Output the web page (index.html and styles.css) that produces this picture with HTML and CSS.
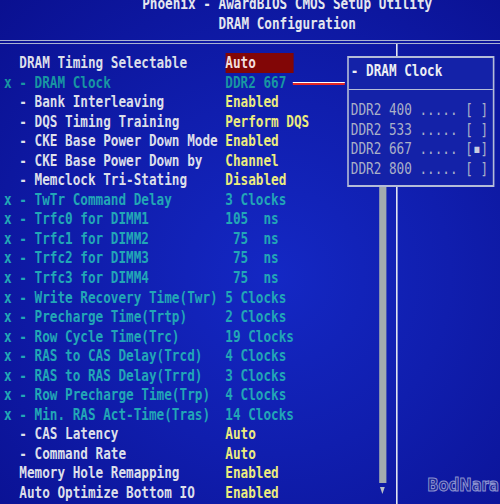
FILE: index.html
```html
<!DOCTYPE html>
<html lang="en">
<head>
    <meta charset="UTF-8">
    <meta name="viewport" content="width=device-width, initial-scale=1.0">
    <title>DRAM Configuration</title>
    <link rel="stylesheet" href="styles.css">
</head>
<body>
    <div class="screen">
        <div class="title">
            <div>Phoenix - AwardBIOS CMOS Setup Utility</div>
            <div>DRAM Configuration</div>
        </div>
        <div class="rule"></div>

        <div class="main">
            <div class="list">
                <div class="row"><span class="mark"></span><span class="label">DRAM Timing Selectable</span><span class="value sel">Auto</span></div>
                <div class="row dim first"><span class="mark">x</span><span class="label">- DRAM Clock</span><span class="value">DDR2 667</span></div>
                <div class="row"><span class="mark"></span><span class="label">- Bank Interleaving</span><span class="value">Enabled</span></div>
                <div class="row"><span class="mark"></span><span class="label">- DQS Timing Training</span><span class="value">Perform DQS</span></div>
                <div class="row"><span class="mark"></span><span class="label">- CKE Base Power Down Mode</span><span class="value">Enabled</span></div>
                <div class="row"><span class="mark"></span><span class="label">- CKE Base Power Down by</span><span class="value">Channel</span></div>
                <div class="row"><span class="mark"></span><span class="label">- Memclock Tri-Stating</span><span class="value">Disabled</span></div>
                <div class="row dim"><span class="mark">x</span><span class="label">- TwTr Command Delay</span><span class="value">3 Clocks</span></div>
                <div class="row dim"><span class="mark">x</span><span class="label">- Trfc0 for DIMM1</span><span class="value">105  ns</span></div>
                <div class="row dim"><span class="mark">x</span><span class="label">- Trfc1 for DIMM2</span><span class="value"> 75  ns</span></div>
                <div class="row dim"><span class="mark">x</span><span class="label">- Trfc2 for DIMM3</span><span class="value"> 75  ns</span></div>
                <div class="row dim"><span class="mark">x</span><span class="label">- Trfc3 for DIMM4</span><span class="value"> 75  ns</span></div>
                <div class="row dim"><span class="mark">x</span><span class="label">- Write Recovery Time(Twr)</span><span class="value">5 Clocks</span></div>
                <div class="row dim"><span class="mark">x</span><span class="label">- Precharge Time(Trtp)</span><span class="value">2 Clocks</span></div>
                <div class="row dim"><span class="mark">x</span><span class="label">- Row Cycle Time(Trc)</span><span class="value">19 Clocks</span></div>
                <div class="row dim"><span class="mark">x</span><span class="label">- RAS to CAS Delay(Trcd)</span><span class="value">4 Clocks</span></div>
                <div class="row dim"><span class="mark">x</span><span class="label">- RAS to RAS Delay(Trrd)</span><span class="value">3 Clocks</span></div>
                <div class="row dim"><span class="mark">x</span><span class="label">- Row Precharge Time(Trp)</span><span class="value">4 Clocks</span></div>
                <div class="row dim"><span class="mark">x</span><span class="label">- Min. RAS Act-Time(Tras)</span><span class="value">14 Clocks</span></div>
                <div class="row"><span class="mark"></span><span class="label">- CAS Latency</span><span class="value">Auto</span></div>
                <div class="row"><span class="mark"></span><span class="label">- Command Rate</span><span class="value">Auto</span></div>
                <div class="row"><span class="mark"></span><span class="label">Memory Hole Remapping</span><span class="value">Enabled</span></div>
                <div class="row"><span class="mark"></span><span class="label">Auto Optimize Bottom IO</span><span class="value">Enabled</span></div>
            </div>

            <div class="scroll">
                <div class="thumb"></div>
                <div class="arrow"></div>
            </div>

            <div class="help"></div>
        </div>

        <!-- option popup for the selected item -->
        <div class="link"></div>
        <div class="popup">
            <div class="popup-title">- DRAM Clock</div>
            <div class="popup-list">
                <div class="opt">DDR2 400 ..... [ ]</div>
                <div class="opt">DDR2 533 ..... [ ]</div>
                <div class="opt">DDR2 667 ..... [<span class="tick">&#9642;</span>]</div>
                <div class="opt">DDR2 800 ..... [ ]</div>
            </div>
        </div>

        <div class="stamp">BodNara</div>
    </div>
</body>
</html>
```

FILE: styles.css
```css
html, body {
    margin: 0;
    height: 100%;
    overflow: hidden;
    background: #0c1296;
}

/* text cells are drawn wide, then squeezed to the narrow BIOS pitch */
.screen {
    position: relative;
    width: 625px;
    height: 504px;
    overflow: hidden;
    transform: scaleX(0.8);
    transform-origin: 0 0;
    font-family: "DejaVu Sans Mono", monospace;
    font-weight: bold;
    font-size: 15.85px;
    line-height: 19.55px;
    color: #dcdfea;
    background: radial-gradient(ellipse at 55% 55%, #1428c4 0%, #101eae 45%, #0a1090 100%);
}

.title {
    width: 718px;
    margin-top: -5.85px;
    text-align: center;
    color: #e4e6ee;
}

.rule {
    margin-top: 6.75px;
    border-top: 4px double #aab2d2;
}

.main {
    display: flex;
    height: 460px;
}

.list {
    box-sizing: border-box;
    width: 473.75px;
    padding: 9px 0 0 5px;
}

.row {
    display: flex;
    height: 19.55px;
    white-space: pre;
}

.mark {
    width: 2ch;
    flex: none;
}

.label {
    width: 27ch;
    flex: none;
}

.value {
    color: #ecec7e;
}

.row.dim,
.row.dim .value {
    color: #22a6b6;
}

.row.dim.first,
.row.dim.first .value {
    color: #1896a2;
}

.value.sel {
    width: 9ch;
    background: #820606;
    color: #f2dede;
}

.scroll {
    width: 8.75px;
    padding-top: 20px;
    display: flex;
    flex-direction: column;
    align-items: center;
}

.thumb {
    width: 100%;
    height: 419px;
    background: #a3acae;
}

.arrow {
    margin-top: 4px;
    width: 0;
    height: 0;
    border-left: 3.75px solid transparent;
    border-right: 3.75px solid transparent;
    border-top: 7px solid #b8c0c8;
}

.help {
    flex: 1;
    margin-left: 12.5px;
    border-left: 2.5px solid #e0e4f0;
}

.link {
    position: absolute;
    left: 366px;
    top: 81.5px;
    width: 65px;
    height: 2px;
    background: #e42626;
    border-top: 1px solid #ffffff;
}

.popup {
    position: absolute;
    left: 434px;
    top: 56px;
    box-sizing: border-box;
    width: 183.75px;
    border: 2px solid #b4bcd8;
    background: #1422a8;
}

.popup-title {
    padding: 2.7px 0 8.75px 2.5px;
    border-bottom: 1.5px solid #b4bcd8;
    color: #eceef4;
    white-space: pre;
}

.popup-list {
    padding: 10px 0 7px 2.5px;
    color: #aab0c8;
    font-weight: normal;
}

.opt {
    white-space: pre;
}

.tick {
    color: #c8cce0;
}

.stamp {
    position: absolute;
    left: 534px;
    top: 476px;
    font-family: "DejaVu Sans", sans-serif;
    font-weight: bold;
    font-size: 18.5px;
    line-height: 1;
    color: #1c2694;
    -webkit-text-stroke: 1.2px #8a90d0;
}
```
